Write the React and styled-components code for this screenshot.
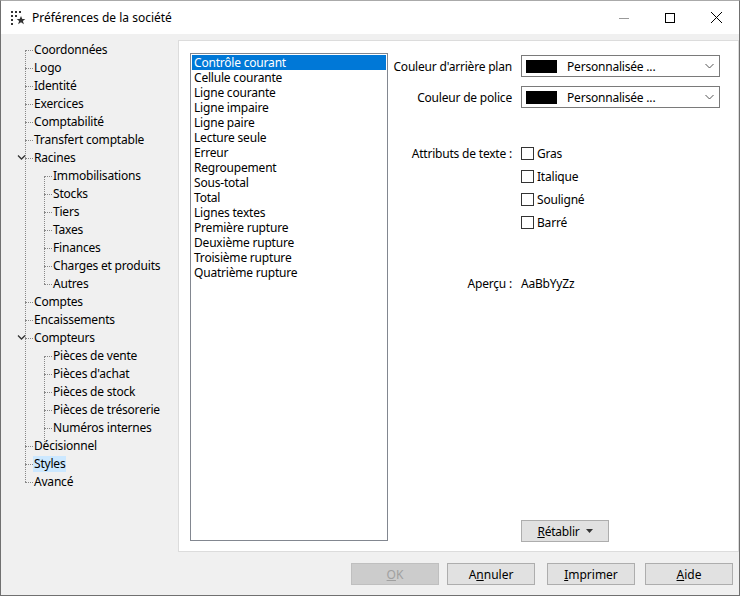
import React from "react";
import styled, { createGlobalStyle } from "styled-components";

const G = createGlobalStyle`
  html,body{margin:0;padding:0;background:#f0f0f0;}
  body{font-family:"Noto Sans","Open Sans",sans-serif;font-size:12px;color:#000;}
  *{box-sizing:border-box;}
`;
const Win = styled.div`width:740px;height:596px;border:1px solid #707070;border-top-color:#aaa;display:flex;flex-direction:column;overflow:hidden;white-space:nowrap;`;
const Title = styled.div`height:33px;background:#fff;display:flex;align-items:center;padding-left:9px;font-size:12px;`;
const TitleText = styled.span`margin-left:6px;flex:1;`;
const Ctl = styled.div`width:46px;height:33px;display:flex;align-items:center;justify-content:center;`;
const Body = styled.div`flex:1;display:flex;padding:6px 0 0 0;`;
const Left = styled.div`width:177px;flex-shrink:0;padding-top:1px;position:relative;`;
const Row = styled.div`height:18px;display:flex;align-items:center;padding-left:${p => p.lv * 19 + 32}px;position:relative;`;
const Label = styled.span`padding:0 1px;line-height:16px;letter-spacing:-0.2px;${p => p.sel && "background:#cce8ff;"}`;
const HLine = styled.span`position:absolute;left:${p => p.lv * 19 + 24}px;top:9px;width:8px;border-top:1px dotted #888;`;
const VLine = styled.span`position:absolute;left:${p => p.x}px;top:${p => p.top}px;height:${p => p.h}px;border-left:1px dotted #888;`;
const Chev = styled.svg`position:absolute;left:16px;top:5px;`;
const Right = styled.div`width:561px;display:flex;flex-direction:column;`;
const Panel = styled.div`height:512px;background:#fff;border:1px solid #dcdcdc;display:flex;padding:12px 0 9px 11px;`;
const List = styled.div`width:198px;flex-shrink:0;border:1px solid #828790;padding:1px;height:488px;letter-spacing:-0.2px;`;
const Item = styled.div`height:15px;line-height:15px;padding-left:2px;${p => p.sel && "background:#0078d7;color:#fff;"}`;
const Form = styled.div`flex:1;display:flex;flex-direction:column;padding:2px 0 0 0;letter-spacing:-0.2px;`;
const FRow = styled.div`display:flex;align-items:center;height:${p => p.h || 22}px;margin-top:${p => p.mt || 0}px;`;
const FLabel = styled.div`width:133px;flex-shrink:0;text-align:right;padding-right:9px;`;
const Select = styled.div`width:199px;height:22px;border:1px solid #7a7a7a;display:flex;align-items:center;padding:0 5px 0 4px;`;
const Swatch = styled.span`width:31px;height:13px;background:#000;margin-right:10px;`;
const Grow = styled.span`flex:1;`;
const Check = styled.span`width:13px;height:13px;border:1px solid #333;margin-right:3px;background:#fff;`;
const Spacer = styled.div`flex:1;`;
const Btn = styled.div`width:88px;height:22px;border:1px solid ${p => p.dis ? "#bfbfbf" : "#adadad"};background:${p => p.dis ? "#cccccc" : "#e1e1e1"};color:${p => p.dis ? "#a0a0a0" : "#000"};display:flex;align-items:center;justify-content:center;gap:6px;margin-left:${p => p.ml || 0}px;`;
const Bottom = styled.div`display:flex;justify-content:flex-end;gap:8px;padding:11px 6px 0 0;`;

const tree = [
  [0,"Coordonnées"],[0,"Logo"],[0,"Identité"],[0,"Exercices"],[0,"Comptabilité"],[0,"Transfert comptable"],
  [0,"Racines",1],[1,"Immobilisations"],[1,"Stocks"],[1,"Tiers"],[1,"Taxes"],[1,"Finances"],[1,"Charges et produits"],[1,"Autres"],
  [0,"Comptes"],[0,"Encaissements"],[0,"Compteurs",1],[1,"Pièces de vente"],[1,"Pièces d'achat"],[1,"Pièces de stock"],[1,"Pièces de trésorerie"],[1,"Numéros internes"],
  [0,"Décisionnel"],[0,"Styles",0,1],[0,"Avancé"]];
const items = ["Contrôle courant","Cellule courante","Ligne courante","Ligne impaire","Ligne paire","Lecture seule","Erreur","Regroupement","Sous-total","Total","Lignes textes","Première rupture","Deuxième rupture","Troisième rupture","Quatrième rupture"];
const Arrow = () => <svg width="9" height="6"><path d="M.5 1l4 4 4-4" fill="none" stroke="#555"/></svg>;

export default function App() {
  return (<><G/>
    <Win>
      <Title>
        <svg width="16" height="16" viewBox="0 0 16 16"><g fill="#333"><rect x="1" y="1" width="2" height="2"/><rect x="5" y="1" width="2" height="2"/><rect x="1" y="5" width="2" height="2"/><rect x="5" y="5" width="2" height="2"/><rect x="1" y="9" width="2" height="2"/><rect x="1" y="13" width="2" height="2"/><rect x="9" y="1" width="2" height="2"/></g><path d="M11 6l1.3 3h3l-2.4 2 1 3.2L11 12.3 8.1 14.2l1-3.2-2.4-2h3z" fill="#333"/></svg>
        <TitleText>Préférences de la société</TitleText>
        <Ctl><svg width="10" height="10"><path d="M0 5.5h10" stroke="#999"/></svg></Ctl>
        <Ctl><svg width="10" height="10"><rect x=".5" y=".5" width="9" height="9" fill="none" stroke="#000"/></svg></Ctl>
        <Ctl><svg width="11" height="11"><path d="M0 0l11 11M11 0L0 11" stroke="#000"/></svg></Ctl>
      </Title>
      <Body>
        <Left>
          <VLine x={24} top={10} h={432}/>
          <VLine x={43} top={136} h={108}/>
          <VLine x={43} top={316} h={90}/>
          {tree.map(([lv, t, exp, sel], i) => (
            <Row key={i} lv={lv}>
              <HLine lv={lv}/>
              {exp ? <Chev width="9" height="7" viewBox="0 0 9 7"><path d="M1 1.5l3.5 3.5L8 1.5" fill="none" stroke="#333" strokeWidth="1.3"/></Chev> : null}
              <Label sel={sel}>{t}</Label>
            </Row>))}
        </Left>
        <Right>
          <Panel>
            <List>{items.map((t, i) => <Item key={i} sel={i === 0}>{t}</Item>)}</List>
            <Form>
              <FRow><FLabel>Couleur d'arrière plan</FLabel><Select><Swatch/>Personnalisée ...<Grow/><Arrow/></Select></FRow>
              <FRow mt={9}><FLabel>Couleur de police</FLabel><Select><Swatch/>Personnalisée ...<Grow/><Arrow/></Select></FRow>
              <FRow mt={34}><FLabel>Attributs de texte :</FLabel><Check/>Gras</FRow>
              <FRow mt={1}><FLabel/><Check/>Italique</FRow>
              <FRow mt={1}><FLabel/><Check/>Souligné</FRow>
              <FRow mt={1}><FLabel/><Check/>Barré</FRow>
              <FRow mt={39}><FLabel>Aperçu :</FLabel>AaBbYyZz</FRow>
              <Spacer/>
              <FRow><FLabel/><Btn><span><u>R</u>établir</span><svg width="7" height="4"><path d="M0 0h7L3.5 4z" fill="#333"/></svg></Btn></FRow>
            </Form>
          </Panel>
          <Bottom>
            <Btn dis><span><u>O</u>K</span></Btn>
            <Btn><span>A<u>n</u>nuler</span></Btn>
            <Btn ml={4}><span><u>I</u>mprimer</span></Btn>
            <Btn ml={2}><span><u>A</u>ide</span></Btn>
          </Bottom>
        </Right>
      </Body>
    </Win></>);
}
